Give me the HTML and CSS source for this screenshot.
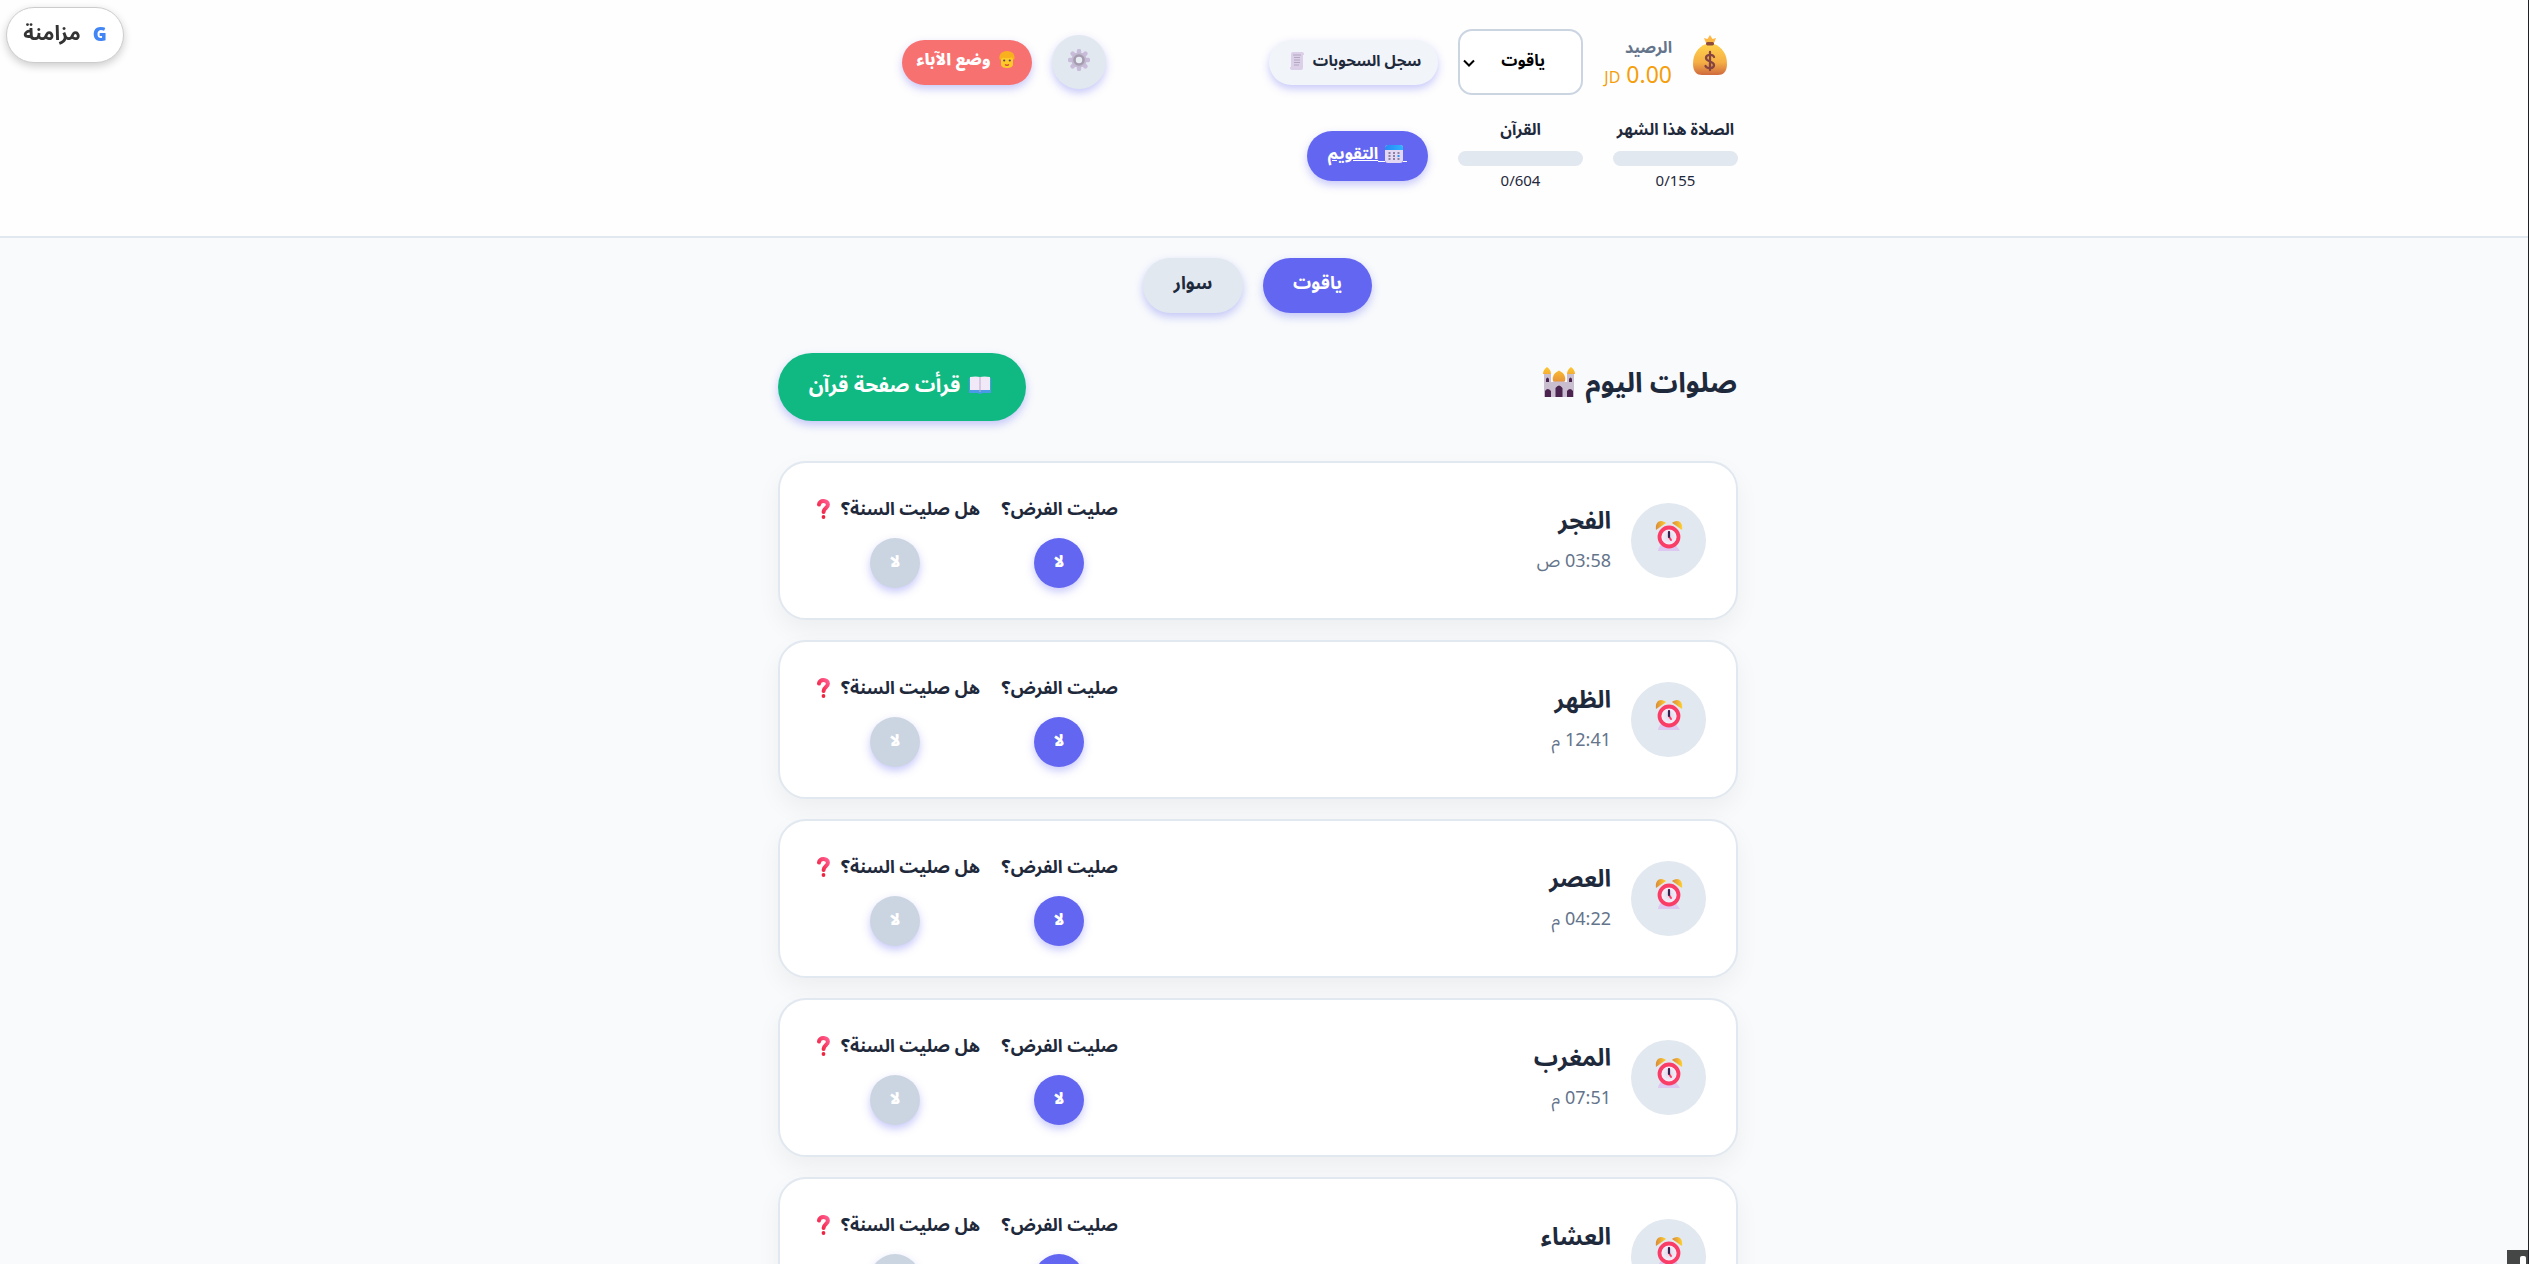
FILE: index.html
```html
<!DOCTYPE html>
<html lang="ar" dir="rtl">
<head>
    <meta charset="UTF-8">
    <meta name="viewport" content="width=device-width, initial-scale=1.0">
    <title>صلوات اليوم</title>
    <link rel="stylesheet" href="styles.css">
</head>
<body>
    <svg class="sprite" width="0" height="0">
        <defs>
            <linearGradient id="gold" x1="0" y1="0" x2="0" y2="1">
                <stop offset="0" stop-color="#ffd24d"/>
                <stop offset=".6" stop-color="#f5ae45"/>
                <stop offset="1" stop-color="#cf6a3e"/>
            </linearGradient>
            <linearGradient id="dome" x1="0" y1="0" x2="0" y2="1">
                <stop offset="0" stop-color="#ffc72e"/>
                <stop offset="1" stop-color="#e8943a"/>
            </linearGradient>
            <linearGradient id="bell" x1="0" y1="0" x2="1" y2="0">
                <stop offset="0" stop-color="#d98a3a"/>
                <stop offset="1" stop-color="#ffd02e"/>
            </linearGradient>
            <linearGradient id="sky" x1="0" y1="0" x2="1" y2="0">
                <stop offset="0" stop-color="#2b86f5"/>
                <stop offset="1" stop-color="#2cb3ff"/>
            </linearGradient>
            <linearGradient id="red" x1="0" y1="1" x2="1" y2="0">
                <stop offset="0" stop-color="#f01f3c"/>
                <stop offset="1" stop-color="#ff5b8f"/>
            </linearGradient>
            <radialGradient id="face">
                <stop offset="0" stop-color="#dcd6e8"/>
                <stop offset="1" stop-color="#fdf6ff"/>
            </radialGradient>
        </defs>
        <symbol id="clock" viewBox="0 0 28 31">
            <path d="M3 31c0-3 3-7 6-8h10l6 8z" fill="#dcc8f0"/>
            <path d="M1 10C0 4 3 1 6 1c2 0 4 1 5 2z" fill="url(#bell)"/>
            <path d="M27 10c1-6-2-9-5-9-2 0-4 1-5 2z" fill="url(#bell)"/>
            <circle cx="14" cy="17" r="9.500" fill="url(#face)" stroke="#fa3d67" stroke-width="3.800"/>
            <path d="M14 12v5l2 3" fill="none" stroke="#fa3d67" stroke-width="2" stroke-linecap="round"/>
            <path d="M14 12v5" stroke="#35214f" stroke-width="2.200" stroke-linecap="round"/>
        </symbol>
        <symbol id="question" viewBox="0 0 13 20">
            <path d="M2 5.500C2.300 .8 10.800 .8 10.900 5.600 11 9 6.700 9 6.600 13" fill="none" stroke="url(#red)" stroke-width="4" stroke-linecap="round"/>
            <circle cx="6.500" cy="18" r="1.900" fill="#ee2440"/>
        </symbol>
    </svg>

    <button class="sync-btn"><b>G</b><span>مزامنة</span></button>

    <header>
        <div class="header-inner">
            <div class="header-row">
                <div class="balance">
                    <svg class="icon-bag" viewBox="0 0 34 40">
                        <path d="M13 8 11 3l3.500 1L17 0l2.500 4L23 3l-2 5z" fill="#ffb743"/>
                        <path d="M13 9C5 12 0 19 0 29c0 8 4 11 9 11h16c5 0 9-3 9-11 0-10-5-17-13-20z" fill="url(#gold)"/>
                        <rect x="13" y="7" width="8" height="3.400" rx="1.600" fill="#8a4b3c"/>
                        <path d="M21 22c-1-3-8-3-8 1s8 3 8 7-7 4-8.500 1M17 17v18" fill="none" stroke="#854442" stroke-width="2.300" stroke-linecap="round"/>
                    </svg>
                    <div class="balance-text">
                        <div class="balance-label">الرصيد</div>
                        <div class="balance-value">0.00 <small>JD</small></div>
                    </div>
                </div>
                <div class="child-select">
                    <span>ياقوت</span>
                    <svg viewBox="0 0 12 8"><path d="M1 1.500l5 5 5-5" fill="none" stroke="#000" stroke-width="2"/></svg>
                </div>
                <button class="btn log-btn">
                    <span>سجل السحوبات</span>
                    <svg class="icon-scroll" viewBox="0 0 14 18">
                        <path d="M1 2q0-2 2-2h9q2 0 2 2v1h-1v13q0 2-2 2H2q-2 0-2-2v-1h1z" fill="#dccfe8"/>
                        <path d="M3 3h8M4 5.500h6M4 8h6M4 10.500h6M4 13h5" stroke="#b1a7c0"/>
                    </svg>
                </button>
                <button class="btn settings-btn">
                    <svg viewBox="0 0 22 22">
                        <path d="M11 2v18M2 11h18M4.600 4.600l12.800 12.800M17.400 4.600 4.600 17.400" stroke="#c9bcdb" stroke-width="4.400" stroke-linecap="round"/>
                        <circle cx="11" cy="11" r="7.500" fill="#c3b9d1"/>
                        <circle cx="11" cy="11" r="4.500" fill="#e8edf4" stroke="#a69cb0" stroke-width="2.600"/>
                    </svg>
                </button>
                <button class="btn parent-btn">
                    <svg class="icon-face" viewBox="0 0 16 17">
                        <path d="M2 6h12v7c0 3-3 4-6 4s-6-1-6-4z" fill="#ffca28"/>
                        <path d="M1 9C-.5 6 1 2 4 1q4-2 8 0c3 1 4.500 5 3 8l-2-2.500q-5 1-9 0z" fill="#f9b01e"/>
                        <circle cx="5.200" cy="9.500" r="1.100" fill="#574568"/>
                        <circle cx="10.800" cy="9.500" r="1.100" fill="#574568"/>
                        <path d="M6 13.500q2 1.500 4 0" fill="none" stroke="#d7423a" stroke-width="1.300"/>
                    </svg>
                    <span>وضع الآباء</span>
                </button>
            </div>
            <div class="header-row progress-row">
                <div class="progress">
                    <div class="progress-label">الصلاة هذا الشهر</div>
                    <div class="progress-bar"></div>
                    <div class="progress-count" dir="ltr">0/155</div>
                </div>
                <div class="progress">
                    <div class="progress-label">القرآن</div>
                    <div class="progress-bar"></div>
                    <div class="progress-count" dir="ltr">0/604</div>
                </div>
                <a class="btn calendar-btn">
                    <svg viewBox="-7 0 29 18">
                        <path d="M-7 16.500h7M18 16.500h4" stroke="#fff"/>
                        <rect width="18" height="18" rx="3" fill="#e3d8f4"/>
                        <path d="M0 5V3q0-3 3-3h12q3 0 3 3v2z" fill="url(#sky)"/>
                        <path d="M3.500 8h2m2.500 0h2m2.500 0h2M3.500 11h2m2.500 0h2M3.500 14h2m2.500 0h2m2.500 0h2" stroke="#8c80a3" stroke-width="1.800"/>
                        <path d="M12.500 11h2" stroke="#2196f3" stroke-width="2"/>
                    </svg>
                    <span>التقويم</span>
                </a>
            </div>
        </div>
    </header>

    <main>
        <div class="tabs">
            <button class="btn tab active">ياقوت</button>
            <button class="btn tab">سوار</button>
        </div>

        <div class="title-row">
            <h2>
                <span>صلوات اليوم</span>
                <svg viewBox="0 0 32 30">
                    <path d="M1 7h7v8h3v-1h10v1h3V7h7v23H1z" fill="#c9bdd0"/>
                    <path d="M10 14.500q-2-7 6-11 8 4 6 11zM0 7q0-4 4-7 4 3 4 7zM24 7q0-4 4-7 4 3 4 7z" fill="url(#dome)"/>
                    <path d="M3 12q1.500-3 3 0v3H3zM26 12q1.500-3 3 0v3h-3zM2 30v-6q2.500-4 6 0v6zM24 30v-6q3-4 6 0v6zM12.500 30v-9q3.500-5 7 0v9z" fill="#4c2450"/>
                </svg>
            </h2>
            <button class="btn quran-btn">
                <svg viewBox="0 0 22 18">
                    <path d="M0 2h22v15h-9q-2 2-4 0H0z" fill="#4a9ae8"/>
                    <path d="M1 1q6-1 10 0 4-1 10 0v13H1z" fill="#f1e9f8"/>
                    <path d="M11 1v15" stroke="#b9aacd"/>
                </svg>
                <span>قرأت صفحة قرآن</span>
            </button>
        </div>

        <div class="prayer-list" id="prayerList"></div>
    </main>

    <div class="edge-line"></div>
    <div class="corner-box"><i></i></div>

    <script>
        const prayers = [
            { name: 'الفجر', time: '03:58 ص' },
            { name: 'الظهر', time: '12:41 م' },
            { name: 'العصر', time: '04:22 م' },
            { name: 'المغرب', time: '07:51 م' },
            { name: 'العشاء', time: '09:17 م' }
        ];

        document.getElementById('prayerList').innerHTML = prayers.map(p => `
            <div class="prayer-card">
                <div class="prayer-icon"><svg><use href="#clock"/></svg></div>
                <div class="prayer-info">
                    <div class="prayer-name">${p.name}</div>
                    <div class="prayer-time">${p.time}</div>
                </div>
                <div class="question fard">
                    <div class="question-label"><span>صليت الفرض؟</span></div>
                    <button class="btn toggle">لا</button>
                </div>
                <div class="question sunnah">
                    <div class="question-label"><span>هل صليت السنة؟</span><svg><use href="#question"/></svg></div>
                    <button class="btn toggle muted">لا</button>
                </div>
            </div>
        `).join('');
    </script>
</body>
</html>
```
FILE: styles.css
```css
* {
    box-sizing: border-box;
}
body {
    margin: 0;
    height: 100vh;
    overflow: hidden;
    font-family: 'Noto Sans', 'Noto Sans Arabic', 'DejaVu Sans', sans-serif;
    background-color: #f8fafc;
    color: #1e293b;
}
svg {
    display: block;
    flex: none;
}
.sprite {
    position: absolute;
}
.btn {
    display: flex;
    align-items: center;
    justify-content: center;
    padding: 0;
    border: none;
    border-radius: 50px;
    font-family: inherit;
    font-weight: bold;
    color: white;
    white-space: nowrap;
    box-shadow: 0 4px 8px rgba(99, 102, 241, 0.35);
    cursor: pointer;
}
.sync-btn {
    position: fixed;
    top: 7px;
    left: 6px;
    width: 118px;
    height: 56px;
    display: flex;
    align-items: center;
    justify-content: center;
    gap: 12px;
    padding: 0 0 3px;
    border: 1px solid #ccc;
    border-radius: 28px;
    background-color: white;
    color: #333;
    font-family: inherit;
    font-size: 20.5px;
    font-weight: bold;
    box-shadow: 0 3px 8px rgba(0, 0, 0, 0.2);
}
.sync-btn b {
    font-size: 19px;
    color: #4285f4;
}

/* Header */
header {
    height: 238px;
    padding-right: 13px;
    background-color: #fefefe;
    border-bottom: 2px solid #e2e8f0;
}
.header-inner {
    width: 960px;
    margin: 0 auto;
    padding-top: 29px;
}
.header-row {
    display: flex;
    align-items: center;
    height: 66px;
}
.balance {
    display: flex;
    gap: 21px;
    width: 135px;
    padding: 2px 11px 0 0;
    margin-left: 20px;
}
.icon-bag {
    width: 34px;
    height: 40px;
}
.balance-text {
    white-space: nowrap;
}
.balance-label {
    height: 25px;
    line-height: 24px;
    font-size: 16px;
    font-weight: bold;
    color: #64748b;
}
.balance-value {
    line-height: 29px;
    font-size: 23px;
    color: #f59e0b;
}
.balance-value small {
    font-size: 16px;
}
.child-select {
    display: flex;
    align-items: center;
    justify-content: space-between;
    width: 125px;
    height: 66px;
    padding: 0 36px 3px 3px;
    border: 2px solid #cbd5e1;
    border-radius: 14px;
    background-color: white;
    color: #000;
    font-size: 16px;
    font-weight: bold;
}
.child-select svg {
    width: 12px;
    height: 8px;
    margin-top: 5px;
}
.log-btn {
    width: 169px;
    height: 45px;
    margin-right: 20px;
    gap: 9px;
    padding: 0 0 3px 4px;
    background-color: #f1f5f9;
    color: #1e293b;
    font-size: 15.3px;
}
.icon-scroll {
    width: 14px;
    height: 18px;
}
.settings-btn {
    width: 54px;
    height: 54px;
    margin-right: 163px;
    padding-bottom: 5px;
    background-color: #e2e8f0;
}
.settings-btn svg {
    width: 22px;
    height: 22px;
}
.parent-btn {
    width: 130px;
    height: 45px;
    margin-right: 20px;
    gap: 8px;
    padding: 0 3px 4px 0;
    background-color: #f87171;
    font-size: 16px;
    font-weight: 900;
}
.icon-face {
    width: 16px;
    height: 17px;
    margin-bottom: 2px;
}
.progress-row {
    height: auto;
    margin-top: 22px;
    gap: 30px;
}
.progress {
    width: 125px;
    text-align: center;
}
.progress-label {
    height: 34px;
    line-height: 24px;
    font-size: 16px;
    font-weight: bold;
    white-space: nowrap;
}
.progress-bar {
    height: 15px;
    border-radius: 8px;
    background-color: #e2e8f0;
}
.progress-count {
    margin-top: 3px;
    line-height: 22px;
    font-size: 15px;
}
.calendar-btn {
    width: 121px;
    height: 50px;
    margin-top: 3px;
    padding-bottom: 4px;
    background-color: #6366f1;
    font-size: 16.5px;
    text-decoration: underline;
}
.calendar-btn svg {
    width: 29px;
    height: 18px;
}

/* Content */
main {
    padding: 20px 13px 0 0;
}
.tabs {
    display: flex;
    justify-content: center;
    gap: 20px;
    padding-right: 1px;
}
.tab {
    width: 100px;
    height: 55px;
    padding-bottom: 5px;
    background-color: #e2e8f0;
    color: #1e293b;
    font-size: 18px;
}
.tab.active {
    width: 109px;
    background-color: #6366f1;
    color: white;
}
.title-row {
    display: flex;
    justify-content: space-between;
    width: 960px;
    height: 68px;
    margin: 40px auto;
}
.title-row h2 {
    display: flex;
    align-items: center;
    gap: 11px;
    height: 60px;
    padding-right: 1px;
    margin: 0;
    font-size: 27.8px;
    white-space: nowrap;
}
.title-row h2 svg {
    width: 32px;
    height: 30px;
    margin-bottom: 2px;
}
.quran-btn {
    width: 248px;
    height: 68px;
    gap: 9px;
    padding: 0 4px 4px 0;
    background-color: #10b981;
    font-size: 20.5px;
}
.quran-btn svg {
    width: 22px;
    height: 18px;
}
.prayer-list {
    display: flex;
    flex-direction: column;
    gap: 20px;
    width: 960px;
    margin: 0 auto;
}
.prayer-card {
    display: flex;
    flex: none;
    height: 159px;
    padding: 0 30px;
    border: 2px solid #e2e8f0;
    border-radius: 28px;
    background-color: white;
    box-shadow: 0 10px 25px rgba(0, 0, 0, 0.05);
}
.prayer-icon {
    display: flex;
    align-items: center;
    justify-content: center;
    width: 75px;
    height: 75px;
    margin-top: 40px;
    padding-bottom: 10px;
    border-radius: 50%;
    background-color: #e2e8f0;
}
.prayer-icon svg {
    width: 28px;
    height: 31px;
}
.prayer-info {
    flex: 1;
    padding: 37px 20px 0 0;
}
.prayer-name {
    height: 40px;
    line-height: 40px;
    font-size: 24px;
    font-weight: bold;
}
.prayer-time {
    line-height: 40px;
    font-size: 18px;
    color: #64748b;
}
.question {
    display: flex;
    flex-direction: column;
    align-items: center;
    padding-top: 31px;
}
.fard {
    width: 118px;
    margin-left: 20px;
}
.sunnah {
    width: 170px;
}
.question-label {
    display: flex;
    align-items: center;
    gap: 11px;
    width: 100%;
    height: 31px;
    font-size: 17.7px;
    font-weight: bold;
    white-space: nowrap;
}
.question-label svg {
    width: 13px;
    height: 20px;
    margin-bottom: 2px;
}
.toggle {
    width: 50px;
    height: 50px;
    margin-top: 13px;
    padding-bottom: 3px;
    background-color: #6366f1;
    font-size: 16px;
    font-weight: 900;
}
.toggle.muted {
    background-color: #cbd5e1;
}

/* Window edge */
.edge-line {
    position: fixed;
    top: 0;
    right: 0;
    width: 1px;
    height: 100vh;
    background-color: #202124;
}
.corner-box {
    position: fixed;
    right: 1px;
    bottom: 0;
    width: 21px;
    height: 14px;
    padding: 6px 2px 0 0;
    background-color: #444746;
}
.corner-box i {
    display: block;
    width: 6px;
    height: 8px;
    border-radius: 2px 2px 0 0;
    background-color: white;
}
```
